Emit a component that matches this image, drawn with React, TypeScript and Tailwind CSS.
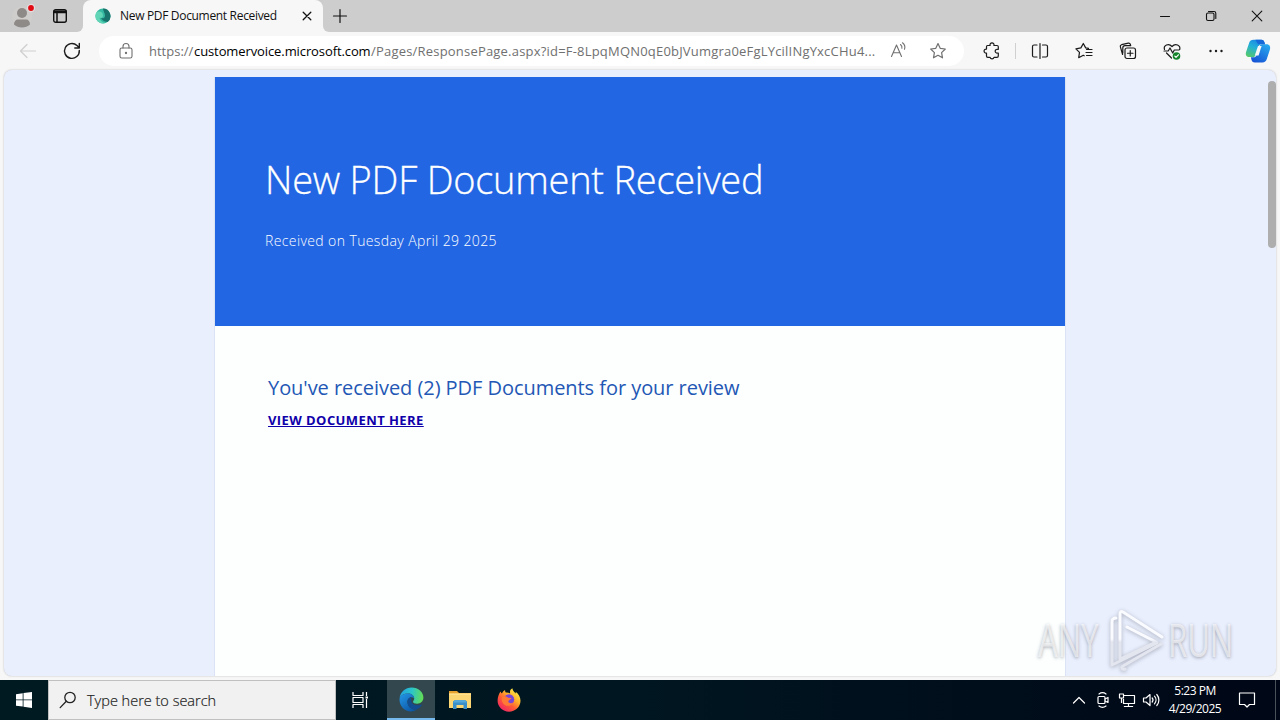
import React from 'react';

interface IconProps {
  children: React.ReactNode;
  size?: number;
  className?: string;
  stroke?: number;
}

const Icon: React.FC<IconProps> = ({ children, size = 20, className = '', stroke = 1.2 }) => (
  <svg
    width={size}
    height={size}
    viewBox={`0 0 ${size} ${size}`}
    fill="none"
    stroke="currentColor"
    strokeWidth={stroke}
    strokeLinecap="round"
    strokeLinejoin="round"
    className={`shrink-0 ${className}`}
  >
    {children}
  </svg>
);

const STAR = 'M10 2.6l2.2 4.7 5.1.7-3.7 3.6.9 5.2L10 14.3l-4.5 2.5.9-5.2L2.7 8l5.1-.7z';

const EdgeLogo = () => (
  <svg width="25" height="25" viewBox="0 0 25 25" className="shrink-0">
    <defs>
      <linearGradient id="edgeTop" x1="0" y1="0.3" x2="1" y2="0.4">
        <stop offset="0" stopColor="#239fe0" />
        <stop offset="0.5" stopColor="#2bc5ca" />
        <stop offset="1" stopColor="#63dd55" />
      </linearGradient>
      <linearGradient id="edgeBottom" x1="0" y1="0" x2="0.7" y2="1">
        <stop offset="0" stopColor="#2497e8" />
        <stop offset="1" stopColor="#0c58a6" />
      </linearGradient>
    </defs>
    <path d="M0.6 11C1.4 4.8 6.4.5 12.6.5c6.8 0 11.8 4.8 11.8 10 0 3.9-2.9 6.2-6.2 6.2-2.6 0-4.2-1-4.2-2 0-.7 1.2-1.2 1.2-3.2C15.2 8.600 12.400 6.500 8.900 6.500 5 6.500 1.800 8.400.6 11z" fill="url(#edgeTop)" />
    <path d="M.5 12.5C.6 8.900 4.400 6.500 8.800 6.500c3.600 0 6.200 2.100 6.400 4.800-1-.9-2-1.200-3.200-1.100-2.100.2-3.600 2-3.600 4.500 0 4.500 3.900 8.200 8.900 8.100-1.500 1.100-3.300 1.700-5.100 1.700C5.500 24.500.500 19.200.500 12.500z" fill="url(#edgeBottom)" />
    <path d="M12 10.200c-2.100.2-3.600 2-3.600 4.500 0 4.500 3.900 8.200 8.900 8.100 2.300-1 4.300-2.500 5.500-4.700.3-.5-.2-.9-.7-.6-4.400 2-9.300.3-9.800-3.200-.2-1.500-.1-2.700-.3-4.100z" fill="#124c91" />
  </svg>
);

const FirefoxLogo = () => (
  <svg width="24" height="24" viewBox="0 0 24 24" className="shrink-0">
    <defs>
      <linearGradient id="fox" x1="0.85" y1="0.05" x2="0.15" y2="0.95">
        <stop offset="0" stopColor="#fff14c" />
        <stop offset="0.35" stopColor="#ffb02a" />
        <stop offset="0.62" stopColor="#ff5a35" />
        <stop offset="1" stopColor="#ee2169" />
      </linearGradient>
    </defs>
    <path d="M3.500 3.500c.4 1 .9 1.500 1.500 2C5.600 3.800 7 2.400 8.200 2c-.3 1-.1 2 .7 2.600 1.700-.1 3.100.1 4.300.8C12.600 3.400 13.200 1.400 15.500.3c-.1 2.400 2 3.500 3.300 5.300.1-.7 0-1.200-.2-1.800 3.100 2.200 4.900 5.500 4.900 9C23.500 19 18.300 23.700 12 23.700S.6 18.800.6 12.800c0-3.600 1.200-6.600 2.900-9.300z" fill="url(#fox)" />
    <circle cx="12" cy="11.500" r="5.200" fill="#7646d8" />
    <path d="M5 9c2.500-1.300 4.500-.8 6.200.8l3.200.3c-.4 1.700-2.400 1.600-3 3-.4 1.600 2.100 3 5 1.300-1.900 4.300-8.500 5-11-.2C4.600 12.600 4.400 10.800 5 9z" fill="#ff7a35" />
  </svg>
);

const FolderLogo = () => (
  <svg width="22" height="20" viewBox="0 0 22 20" className="shrink-0">
    <path d="M0 1h8l2 2h12v3H0z" fill="#e7a12e" />
    <path d="M0 3.500h22V18H0z" fill="#fcd672" />
    <path d="M0 3.500h22v1.500H0z" fill="#ffe08c" />
    <path d="M4 19v-7.500L6 10h10l2 1.500V19h-3.500v-4h-7v4z" fill="#3b8fc9" />
    <path d="M4 12.500L6 10h10l2 2.500z" fill="#56a8d8" />
  </svg>
);

const CopilotLogo = () => (
  <svg width="26" height="24" viewBox="0 0 26 24" className="shrink-0">
    <defs>
      <linearGradient id="cpLeft" x1="0.7" y1="0" x2="0.2" y2="1">
        <stop offset="0" stopColor="#1b82e5" />
        <stop offset="0.45" stopColor="#23b0d8" />
        <stop offset="1" stopColor="#55c96b" />
      </linearGradient>
      <linearGradient id="cpRight" x1="0.8" y1="0" x2="0.2" y2="1">
        <stop offset="0" stopColor="#27a7ee" />
        <stop offset="1" stopColor="#1653d5" />
      </linearGradient>
    </defs>
    <path d="M8.500.8h7.800c2 0 2.700 1.100 3.200 2.800l.5 1.700h-3.500c-1.600 0-2.400.8-2.900 2.300l-2.700 8.200c-.6 1.700-1.500 2.300-3.200 2.300H4.500C1.500 18.100.3 16 1 13.200L4.100 4C4.800 1.900 6.300.8 8.500.8z" fill="url(#cpLeft)" />
    <path d="M17.500 23.400H9.800c-2 0-2.900-1.200-3.400-3l-.5-2.100h2.500c1.700 0 2.700-.8 3.200-2.400l2.600-8.200c.5-1.600 1.500-2.500 3.200-2.500h4.100c3 0 4.200 2.200 3.500 5L21.800 20c-.7 2.200-2.100 3.400-4.300 3.400z" fill="url(#cpRight)" />
    <path d="M8.500.8h7.800c2 0 2.700 1.100 3.200 2.800l.5 1.700h-7L10.500.8z" fill="#1667d8" />
    <path d="M13 7h3.600l-3 9.500H9.800z" fill="#f7f7f7" />
  </svg>
);

const TabBar = () => (
  <div className="flex h-8 shrink-0 items-stretch bg-[#f7f7f7] text-[#111]">
    <div className="flex w-[83px] items-center rounded-br-md bg-[#cbcbcb]">
      <svg width="24" height="26" viewBox="0 0 24 26" className="ml-3">
        <circle cx="10" cy="13.500" r="10" fill="#d0cecc" />
        <circle cx="10" cy="10" r="5" fill="#8e8a88" />
        <path d="M2 21.500c0-3 1.500-5 4-5h8c2.500 0 4 2 4 5-2 2-5 3-8 3s-6-1-8-3z" fill="#8e8a88" />
        <circle cx="19" cy="5" r="4.200" fill="#e4dcdc" />
        <circle cx="19" cy="5" r="2.900" fill="#e10b14" />
      </svg>
      <Icon size={16} stroke={1.400} className="ml-4">
        <rect x="1.700" y="1.700" width="12.600" height="12.600" rx="2" />
        <path d="M2 3.200h12M2 4.400h12M5 5v9" strokeWidth="1.500" />
      </Icon>
    </div>
    <div className="flex w-[240px] items-center bg-[#cbcbcb]">
      <div className="flex h-8 w-[240px] items-center rounded-t-lg bg-[#f7f7f7]">
        <svg width="16" height="16" viewBox="0 0 16 16" className="ml-3 shrink-0">
          <circle cx="8" cy="8" r="7.500" fill="#35b8a2" />
          <path d="M8 .5a7.500 7.500 0 0 1 4.500 13.500C9 13.500 6.500 12 6 9.500 7 11 10 10.500 10 7.500 10 5 8 3 8 .5z" fill="#17736b" />
          <path d="M1 5C4 2 8 4 8 7.500c0 2-2 3-3.500 2C5 13 8 15 11 14.800A7.500 7.500 0 0 1 1 5z" fill="#62d5b6" />
        </svg>
        <span className="ml-[9px] w-[182px] whitespace-nowrap text-[12px] tracking-[-0.32px]">New PDF Document Received</span>
        <Icon size={10} stroke={1.300}>
          <path d="M1.200 1.200l7.600 7.600M8.800 1.200L1.200 8.800" />
        </Icon>
      </div>
    </div>
    <div className="flex flex-1 items-center rounded-bl-md bg-[#cdcdcd]">
      <Icon size={16} className="ml-[9px]">
        <path d="M8 1.500v13M1.500 8h13" />
      </Icon>
      <div className="ml-auto flex items-center">
        <div className="flex w-[46px] justify-center">
          <Icon size={12} stroke={1.100}><path d="M1.500 6.500h9" /></Icon>
        </div>
        <div className="flex w-[46px] justify-center">
          <Icon size={12} stroke={1.100}>
            <rect x="1.500" y="3" width="7.500" height="7.500" rx="1.500" />
            <path d="M3.500 1.500H9c1 0 1.800.8 1.800 1.800V8.500" />
          </Icon>
        </div>
        <div className="flex w-[46px] justify-center">
          <Icon size={12} stroke={1.100}><path d="M1.200 1.200l9.600 9.600M10.800 1.200l-9.600 9.600" /></Icon>
        </div>
      </div>
    </div>
  </div>
);

const ToolButton: React.FC<{ children: React.ReactNode }> = ({ children }) => (
  <div className="flex w-11 shrink-0 items-center justify-center">{children}</div>
);

const Toolbar = () => (
  <div className="flex h-[38px] shrink-0 items-center bg-[#f7f7f7] text-[#1b1b1b]">
    <Icon className="ml-[18px] text-[#cfcfcf]">
      <path d="M17.500 10H2.500M9 3.500L2.500 10 9 16.500" />
    </Icon>
    <Icon className="ml-6" stroke={1.400}>
      <path d="M17.300 9.500A7.400 7.400 0 1 1 15 4.600l2 2M17.300 2.500v4.500h-4.500" />
    </Icon>
    <div className="ml-[17px] flex h-[30px] w-[865px] shrink-0 items-center rounded-full bg-white text-[#707070]">
      <Icon className="ml-[17px]" stroke={1.100}>
        <rect x="4" y="7" width="12" height="10" rx="1.800" />
        <path d="M7 7V5.500a3 3 0 0 1 6 0V7" />
        <circle cx="10" cy="12" r="0.600" fill="currentColor" />
      </Icon>
      <div className="ml-[13px] flex w-[730px] whitespace-nowrap text-[13px] leading-5">
        <span className="w-[45px]">https://</span>
        <span className="w-[177px] tracking-[-0.1px] text-black">customervoice.microsoft.com</span>
        <span className="tracking-[0.2px]">/Pages/ResponsePage.aspx?id=F-8LpqMQN0qE0bJVumgra0eFgLYcilINgYxcCHu4...</span>
      </div>
      <Icon className="ml-[10px]" stroke={1.100}>
        <path d="M2.500 15.500L7.500 4l5 11.500M4.200 11.800h6.600M11.500 3.500c1.300 1 1.700 2.300 1.400 3.800M13.500 1.800c2.200 1.700 2.800 4.200 2 6.500" />
      </Icon>
      <Icon className="ml-[19px]"><path d={STAR} /></Icon>
    </div>
    <div className="flex w-[51px] shrink-0 justify-center pl-1">
      <Icon>
        <path d="M5.500 4.500h2.600a2 2 0 1 1 3.800 0H15c.8 0 1.300.5 1.300 1.300v2.500h-.800a1.900 1.900 0 1 0 0 3.700h.800v3c0 .8-.5 1.300-1.300 1.300h-3a2 2 0 0 1-3.900 0H5.800c-.8 0-1.300-.5-1.300-1.300v-3a2 2 0 1 1 0-3.900V5.800c0-.8.300-1.300 1-1.300z" />
      </Icon>
    </div>
    <div className="mr-[2px] h-4 w-px bg-[#d0d0d0]" />
    <ToolButton>
      <Icon>
        <path d="M7 4H4C3 4 2.500 4.600 2.500 5.500v9c0 1 .6 1.500 1.500 1.500h3M12.500 4H16c1 0 1.500.6 1.500 1.500v9c0 1-.6 1.500-1.500 1.500h-3.500M10 2.500v15" />
      </Icon>
    </ToolButton>
    <ToolButton>
      <Icon>
        <path d="M14.500 7.400l-2.800-.5L9.300 2.500 6.900 6.900l-5 .9 3.600 3.600-.8 5.300 4.600-2.400.9.500M12.500 8.500H18M12 11.500h6M12.500 14.500H18" />
      </Icon>
    </ToolButton>
    <ToolButton>
      <Icon>
        <rect x="7" y="7" width="10.500" height="10.500" rx="2" />
        <path d="M12.250 9.500v5.500M9.500 12.250H15M4.600 13.500L2.400 5.800c-.3-1 .2-1.800 1.200-2.100l6.700-1.500c1-.2 1.700.2 2 1.100l.4 1.300M4.800 12V7c0-1.300 1-2.300 2.200-2.300h5.500" />
      </Icon>
    </ToolButton>
    <ToolButton>
      <Icon>
        <path d="M2.500 8.500C1.200 4.500 6.500 1.500 10 5.500c3.500-4 8.800-1 7.700 3M2 10h4.200L8 7l2.700 5L12.300 9H17M4.500 12l5 5" />
        <circle cx="14.500" cy="15" r="3.800" fill="#16842b" stroke="none" />
        <path d="M12.800 15.100l1.200 1.200 2.400-2.500" stroke="white" />
      </Icon>
    </ToolButton>
    <ToolButton>
      <Icon>
        <g fill="currentColor" stroke="none"><circle cx="4.500" cy="10" r="1.200" /><circle cx="10" cy="10" r="1.200" /><circle cx="15.500" cy="10" r="1.200" /></g>
      </Icon>
    </ToolButton>
    <div className="ml-[7px]"><CopilotLogo /></div>
  </div>
);

const Watermark = () => (
  <div className="absolute top-[606px] left-[1038px] flex h-[70px] w-[198px] items-center text-[45px] leading-none font-medium text-white/60 [text-shadow:0_1px_4px_rgba(70,70,90,0.45)]">
    <div className="w-[67px]">
      <span className="inline-block origin-left -translate-y-0.5 scale-x-[0.69]">ANY</span>
    </div>
    <svg width="62" height="66" viewBox="0 0 62 66" fill="none" strokeLinejoin="round" strokeLinecap="round" className="shrink-0 drop-shadow-[0_1px_2px_rgba(70,70,90,0.4)]">
      <defs>
        <linearGradient id="mark" gradientUnits="userSpaceOnUse" x1="0" y1="31" x2="0" y2="34">
          <stop offset="0" stopColor="#fafbff" />
          <stop offset="1" stopColor="#e3e6ef" />
        </linearGradient>
      </defs>
      <g stroke="url(#mark)" strokeWidth="3">
        <path d="M11 10c-3 0-4 1-4 4v43l45-22" />
        <path d="M57 29L18 4c-2-1-3 0-3 2v45l36-17-29-15" />
        <path d="M56 36L18 58c-2 1-1 4 2 3" />
      </g>
    </svg>
    <span className="ml-[1px] inline-block origin-left -translate-y-0.5 scale-x-[0.69]">RUN</span>
  </div>
);

const PageView = () => (
  <div className="mx-1 flex h-[606px] shrink-0 overflow-hidden rounded-lg bg-[#e9effd] pt-[7px] shadow-[0_0_2px_#b8b8b8]">
    <div className="ml-[210px] w-[852px] shrink-0 border-x border-[#dbe4f4] bg-[#fcfffe]">
      <header className="flex h-[249px] flex-col bg-[#2266e3] pl-[50px] text-white">
        <h1 className="mt-[77px] h-[50px] whitespace-nowrap text-[38px] leading-[50px] font-light tracking-[-0.25px] [-webkit-text-stroke:0.3px_white]">New PDF Document Received</h1>
        <p className="mt-[27px] text-[14px] leading-5 font-light tracking-[0.39px]">Received on Tuesday April 29 2025</p>
      </header>
      <main className="pl-[53px]">
        <h2 className="pt-[46px] text-[20px] leading-8 tracking-[-0.05px] whitespace-nowrap text-[#2357b5]">You&apos;ve received (2) PDF Documents for your review</h2>
        <a href="#" className="mt-[6px] block w-max text-[13px] leading-5 font-bold tracking-[0.42px] text-[#1000aa] underline">VIEW DOCUMENT HERE</a>
      </main>
    </div>
    <div className="mt-1 mr-0 ml-auto h-[167px] w-2 rounded-sm bg-[#aeaeae]" />
  </div>
);

const Taskbar = () => (
  <div className="flex h-10 shrink-0 items-center bg-linear-to-r from-[#001a22] via-[#001620] to-[#000716] text-white">
    <div className="flex w-12 justify-center">
      <svg width="16" height="16" viewBox="0 0 16 16" fill="white">
        <path d="M0 2.300L6.700 1.200v6.300H0zM7.500 1.100L16 0v7.500H7.500zM0 8.300h6.700v6.300L0 13.700zM7.500 8.300H16V16l-8.500-1.200z" />
      </svg>
    </div>
    <div className="flex h-10 w-72 items-center border border-[#c0c0c0] bg-[#f1f1f1] text-[#222]">
      <Icon size={18} className="ml-[10px]" stroke={1.300}>
        <circle cx="11" cy="6.500" r="5.200" />
        <path d="M7.300 10.300L1.200 16.600" />
      </Icon>
      <span className="ml-[10px] pt-0.5 whitespace-nowrap text-[14.5px] font-light [-webkit-text-stroke:0.2px_#222]">Type here to search</span>
    </div>
    <div className="flex w-[51px] justify-center pr-1">
      <Icon size={18} stroke={1.200}>
        <path d="M2 1.500v3h10v-3M2 16.500v-3h10v3M2 6.500h10v5H2zM15.500 1.500v3M15.500 8.500v8" strokeLinecap="square" />
        <path d="M14.500 5.500h2.500v2h-2.500z" fill="currentColor" stroke="none" />
      </Icon>
    </div>
    <div className="flex h-10 w-12 items-center justify-center border-b-2 border-[#76b9ed] bg-[#32474e]"><EdgeLogo /></div>
    <div className="flex w-[50px] justify-center"><FolderLogo /></div>
    <div className="flex w-[48px] justify-center"><FirefoxLogo /></div>
    <div className="ml-auto flex h-10 items-center">
      <Icon size={14}><path d="M1.500 10L7 4.500l5.500 5.500" /></Icon>
      <Icon size={18} className="ml-2">
        <rect x="4" y="5.500" width="7" height="7" rx="1" />
        <path d="M11 8l3-1.500v5L11 10M5 3c2-1.500 5-1.500 7 0M5 15c2 1.500 5 1.500 7 0" />
      </Icon>
      <Icon size={18} className="ml-[6px]">
        <path d="M6.500 4.500h10v8h-11v-4M10.500 12.500v3M6.500 15.500h8M1.500 3h4v4h-4zM3.500 7v4.500" strokeLinecap="square" />
      </Icon>
      <Icon size={18} className="ml-[6px]">
        <path d="M1.500 7v4h2.500l4 3.500v-11L4 7zM10.200 7c1 1.200 1 2.800 0 4M12.500 5.200c2 2.200 2 5.400 0 7.600M14.800 3.500c2.800 3.200 2.800 7.800 0 11" />
      </Icon>
      <div className="ml-[5px] w-[60px] text-center text-[12px] leading-[18px] tracking-[-0.5px] whitespace-nowrap">
        <div>5:23 PM</div>
        <div>4/29/2025</div>
      </div>
      <Icon size={18} className="ml-[13px]">
        <path d="M1.500 2h15v11.500h-5L9 16l-2.500-2.500h-5z" />
      </Icon>
      <div className="ml-[19px] h-10 w-[5px] border-l border-[#4b515b]" />
    </div>
  </div>
);

export default function App() {
  return (
    <div className="relative flex h-[720px] w-[1280px] flex-col overflow-hidden bg-[#f7f7f7] font-['Open_Sans','Noto_Sans',sans-serif]">
      <TabBar />
      <Toolbar />
      <PageView />
      <div className="h-1 shrink-0" />
      <Taskbar />
      <Watermark />
    </div>
  );
}
